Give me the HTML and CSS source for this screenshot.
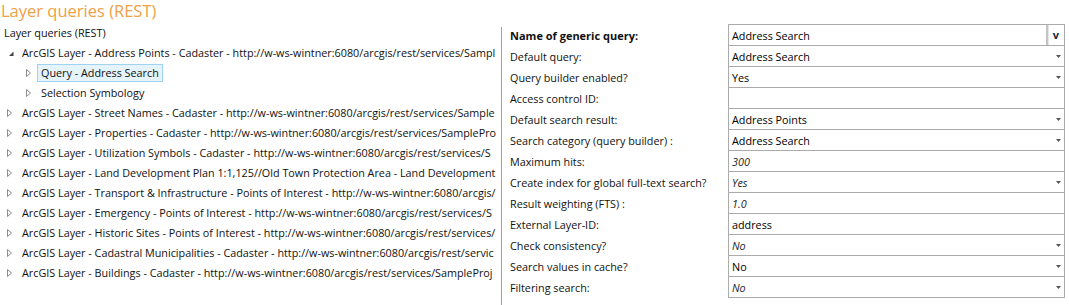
FILE: index.html
```html
<!DOCTYPE html>
<html lang="en">
<head>
    <meta charset="UTF-8">
    <title>Layer queries (REST)</title>
    <link rel="stylesheet" href="styles.css">
</head>
<body>
    <h1 class="page-title">Layer queries (REST)</h1>

    <div class="editor">
        <!-- tree of layers -->
        <div class="tree">
            <div class="node level-0"><span class="node-label">Layer queries (REST)</span></div>
            <div class="node level-1">
                <svg class="twisty" width="10" height="10" viewBox="0 0 10 10"><path d="M7.5 3.5 L7.5 8 L3 8 Z" fill="#444"/></svg>
                <span class="node-label">ArcGIS Layer - Address Points - Cadaster - http://w-ws-wintner:6080/arcgis/rest/services/Sampl</span>
            </div>
            <div class="node level-2">
                <svg class="twisty" width="10" height="10" viewBox="0 0 10 10"><path d="M1.5 1.5 L5.5 5 L1.5 8.5 Z" fill="none" stroke="#8c8c8c"/></svg>
                <span class="node-label selected">Query - Address Search</span>
            </div>
            <div class="node level-2">
                <svg class="twisty" width="10" height="10" viewBox="0 0 10 10"><path d="M1.5 1.5 L5.5 5 L1.5 8.5 Z" fill="none" stroke="#8c8c8c"/></svg>
                <span class="node-label">Selection Symbology</span>
            </div>
            <div class="node level-1">
                <svg class="twisty" width="10" height="10" viewBox="0 0 10 10"><path d="M1.5 1.5 L5.5 5 L1.5 8.5 Z" fill="none" stroke="#8c8c8c"/></svg>
                <span class="node-label">ArcGIS Layer - Street Names - Cadaster - http://w-ws-wintner:6080/arcgis/rest/services/Sample</span>
            </div>
            <div class="node level-1">
                <svg class="twisty" width="10" height="10" viewBox="0 0 10 10"><path d="M1.5 1.5 L5.5 5 L1.5 8.5 Z" fill="none" stroke="#8c8c8c"/></svg>
                <span class="node-label">ArcGIS Layer - Properties - Cadaster - http://w-ws-wintner:6080/arcgis/rest/services/SamplePro</span>
            </div>
            <div class="node level-1">
                <svg class="twisty" width="10" height="10" viewBox="0 0 10 10"><path d="M1.5 1.5 L5.5 5 L1.5 8.5 Z" fill="none" stroke="#8c8c8c"/></svg>
                <span class="node-label">ArcGIS Layer - Utilization Symbols - Cadaster - http://w-ws-wintner:6080/arcgis/rest/services/S</span>
            </div>
            <div class="node level-1">
                <svg class="twisty" width="10" height="10" viewBox="0 0 10 10"><path d="M1.5 1.5 L5.5 5 L1.5 8.5 Z" fill="none" stroke="#8c8c8c"/></svg>
                <span class="node-label">ArcGIS Layer - Land Development Plan 1:1,125//Old Town Protection Area - Land Development</span>
            </div>
            <div class="node level-1">
                <svg class="twisty" width="10" height="10" viewBox="0 0 10 10"><path d="M1.5 1.5 L5.5 5 L1.5 8.5 Z" fill="none" stroke="#8c8c8c"/></svg>
                <span class="node-label">ArcGIS Layer - Transport &amp; Infrastructure - Points of Interest - http://w-ws-wintner:6080/arcgis/</span>
            </div>
            <div class="node level-1">
                <svg class="twisty" width="10" height="10" viewBox="0 0 10 10"><path d="M1.5 1.5 L5.5 5 L1.5 8.5 Z" fill="none" stroke="#8c8c8c"/></svg>
                <span class="node-label">ArcGIS Layer - Emergency - Points of Interest - http://w-ws-wintner:6080/arcgis/rest/services/S</span>
            </div>
            <div class="node level-1">
                <svg class="twisty" width="10" height="10" viewBox="0 0 10 10"><path d="M1.5 1.5 L5.5 5 L1.5 8.5 Z" fill="none" stroke="#8c8c8c"/></svg>
                <span class="node-label">ArcGIS Layer - Historic Sites - Points of Interest - http://w-ws-wintner:6080/arcgis/rest/services/</span>
            </div>
            <div class="node level-1">
                <svg class="twisty" width="10" height="10" viewBox="0 0 10 10"><path d="M1.5 1.5 L5.5 5 L1.5 8.5 Z" fill="none" stroke="#8c8c8c"/></svg>
                <span class="node-label">ArcGIS Layer - Cadastral Municipalities - Cadaster - http://w-ws-wintner:6080/arcgis/rest/servic</span>
            </div>
            <div class="node level-1">
                <svg class="twisty" width="10" height="10" viewBox="0 0 10 10"><path d="M1.5 1.5 L5.5 5 L1.5 8.5 Z" fill="none" stroke="#8c8c8c"/></svg>
                <span class="node-label">ArcGIS Layer - Buildings - Cadaster - http://w-ws-wintner:6080/arcgis/rest/services/SampleProj</span>
            </div>
        </div>

        <div class="splitter"></div>

        <!-- property grid -->
        <div class="props">
            <div class="prop-name strong">Name of generic query:</div>
            <div class="prop-value">
                <span class="value-text">Address Search</span>
                <span class="more-btn">v</span>
            </div>

            <div class="prop-name">Default query:</div>
            <div class="prop-value">
                <span class="value-text">Address Search</span>
                <svg class="drop" width="5" height="3" viewBox="0 0 5 3"><path d="M0 0 H5 L2.5 3 Z" fill="#555"/></svg>
            </div>

            <div class="prop-name">Query builder enabled?</div>
            <div class="prop-value">
                <span class="value-text">Yes</span>
                <svg class="drop" width="5" height="3" viewBox="0 0 5 3"><path d="M0 0 H5 L2.5 3 Z" fill="#555"/></svg>
            </div>

            <div class="prop-name">Access control ID:</div>
            <div class="prop-value"><span class="value-text"></span></div>

            <div class="prop-name">Default search result:</div>
            <div class="prop-value">
                <span class="value-text">Address Points</span>
                <svg class="drop" width="5" height="3" viewBox="0 0 5 3"><path d="M0 0 H5 L2.5 3 Z" fill="#555"/></svg>
            </div>

            <div class="prop-name">Search category (query builder) :</div>
            <div class="prop-value">
                <span class="value-text">Address Search</span>
                <svg class="drop" width="5" height="3" viewBox="0 0 5 3"><path d="M0 0 H5 L2.5 3 Z" fill="#555"/></svg>
            </div>

            <div class="prop-name">Maximum hits:</div>
            <div class="prop-value"><span class="value-text default">300</span></div>

            <div class="prop-name">Create index for global full-text search?</div>
            <div class="prop-value">
                <span class="value-text default">Yes</span>
                <svg class="drop" width="5" height="3" viewBox="0 0 5 3"><path d="M0 0 H5 L2.5 3 Z" fill="#555"/></svg>
            </div>

            <div class="prop-name">Result weighting (FTS) :</div>
            <div class="prop-value"><span class="value-text default">1.0</span></div>

            <div class="prop-name">External Layer-ID:</div>
            <div class="prop-value"><span class="value-text">address</span></div>

            <div class="prop-name">Check consistency?</div>
            <div class="prop-value">
                <span class="value-text default">No</span>
                <svg class="drop" width="5" height="3" viewBox="0 0 5 3"><path d="M0 0 H5 L2.5 3 Z" fill="#555"/></svg>
            </div>

            <div class="prop-name">Search values in cache?</div>
            <div class="prop-value">
                <span class="value-text">No</span>
                <svg class="drop" width="5" height="3" viewBox="0 0 5 3"><path d="M0 0 H5 L2.5 3 Z" fill="#555"/></svg>
            </div>

            <div class="prop-name">Filtering search:</div>
            <div class="prop-value last">
                <span class="value-text default">No</span>
                <svg class="drop" width="5" height="3" viewBox="0 0 5 3"><path d="M0 0 H5 L2.5 3 Z" fill="#555"/></svg>
            </div>
        </div>
    </div>
</body>
</html>
```

FILE: styles.css
```css
body {
    margin: 0;
    padding: 0;
    background-color: #fff;
    color: #111;
    font-family: 'Open Sans', 'Noto Sans', sans-serif;
    font-size: 10.8px;
}

.page-title {
    margin: 0;
    height: 22px;
    padding-left: 1px;
    font-size: 16.5px;
    font-weight: 400;
    line-height: 22px;
    color: #f0a045;
}

.editor {
    display: flex;
    align-items: stretch;
    height: 283px;
}

/* tree */

.tree {
    width: 496px;
    margin-right: 5px;
    padding-top: 1px;
    overflow: hidden;
}

.node {
    display: flex;
    align-items: center;
    height: 20px;
    white-space: nowrap;
}

.level-0 {
    padding-left: 0;
}

.level-1 {
    padding-left: 4px;
}

.level-2 {
    padding-left: 23px;
}

.twisty {
    flex: none;
    width: 10px;
    height: 10px;
    margin-left: 2px;
    margin-right: 2px;
}

.node-label {
    padding: 1px 3px;
    border: 1px solid transparent;
    line-height: 14px;
}

.node-label.selected {
    background-color: #e5f3fb;
    border-color: #9fd3f1;
}

.splitter {
    width: 1px;
    margin-top: 5px;
    background-color: #a0a0a0;
}

/* property grid */

.props {
    display: grid;
    grid-template-columns: 226px 337px;
    align-content: start;
    margin-top: 2px;
}

.prop-name {
    height: 21px;
    padding-left: 8px;
    padding-top: 2px;
    box-sizing: border-box;
    line-height: 19px;
    white-space: nowrap;
}

.prop-name.strong {
    font-size: 11px;
    font-weight: 700;
}

.prop-value {
    display: flex;
    align-items: center;
    height: 21px;
    box-sizing: border-box;
    border: 1px solid #ababab;
    border-bottom: none;
}

.prop-value.last {
    height: 22px;
    border-bottom: 1px solid #ababab;
}

.value-text {
    flex: 1;
    padding-left: 3px;
    line-height: 19px;
    color: #000;
}

.value-text.default {
    font-style: italic;
    color: #222;
}

.drop {
    flex: none;
    margin-right: 3px;
    margin-top: 1px;
}

.more-btn {
    flex: none;
    align-self: stretch;
    width: 16px;
    border-left: 2px solid #c4c4c4;
    box-shadow: inset 1px 0 0 #e6e6e6;
    text-align: center;
    font-weight: 700;
    font-size: 11px;
    line-height: 19px;
    color: #1b2440;
}
```
